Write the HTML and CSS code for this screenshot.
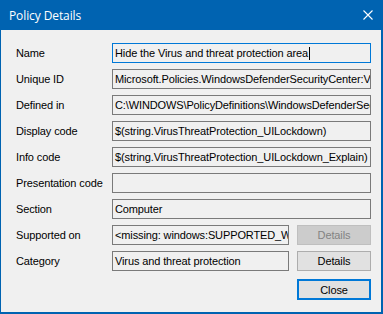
FILE: index.html
```html
<!DOCTYPE html>
<html lang="en">
<head>
    <meta charset="UTF-8">
    <title>Policy Details</title>
    <link rel="stylesheet" href="styles.css">
</head>
<body>
    <div class="window">
        <div class="titlebar">
            <span class="title">Policy Details</span>
            <svg class="close-x" width="10" height="10" viewBox="0 0 10 10">
                <path d="M0.5 0.5 L9.5 9.5 M9.5 0.5 L0.5 9.5" stroke="#ffffff" stroke-width="1.1" fill="none"/>
            </svg>
        </div>
        <div class="content">
            <div class="fields">
                <div class="label">Name</div>
                <div class="box focused">Hide the Virus and threat protection area<span class="caret"></span></div>

                <div class="label">Unique ID</div>
                <div class="box">Microsoft.Policies.WindowsDefenderSecurityCenter:VirusThreatProtection_UILockdown</div>

                <div class="label">Defined in</div>
                <div class="box">C:\WINDOWS\PolicyDefinitions\WindowsDefenderSecurityCenter.admx</div>

                <div class="label">Display code</div>
                <div class="box">$(string.VirusThreatProtection_UILockdown)</div>

                <div class="label">Info code</div>
                <div class="box">$(string.VirusThreatProtection_UILockdown_Explain)</div>

                <div class="label">Presentation code</div>
                <div class="box"></div>

                <div class="label">Section</div>
                <div class="box">Computer</div>

                <div class="label">Supported on</div>
                <div class="with-button">
                    <div class="box">&lt;missing: windows:SUPPORTED_W</div>
                    <button class="btn" disabled>Details</button>
                </div>

                <div class="label">Category</div>
                <div class="with-button">
                    <div class="box">Virus and threat protection</div>
                    <button class="btn">Details</button>
                </div>
            </div>
            <div class="actions">
                <button class="btn default">Close</button>
            </div>
        </div>
    </div>
</body>
</html>
```

FILE: styles.css
```css
html, body {
    margin: 0;
    padding: 0;
    background: #0063b1;
}
.window {
    width: 383px;
    height: 314px;
    box-sizing: border-box;
    border: solid #0063b1;
    border-width: 0 2px 2px 1px;
    background-color: #f0f0f0;
    display: flex;
    flex-direction: column;
}
.titlebar {
    height: 30px;
    background-color: #0063b1;
    display: flex;
    align-items: center;
    padding: 0 10px 0 9px;
    margin: 0 -2px 0 -1px;
}
.title {
    flex: 1;
    color: #ffffff;
    font-family: "Open Sans", "Noto Sans", sans-serif;
    font-size: 12px;
    letter-spacing: -0.1px;
    padding-top: 1px;
}
.close-x {
    margin-bottom: 1px;
}
.content {
    padding: 13px 10px 0 15px;
    font-family: "Liberation Sans", Arial, sans-serif;
    font-size: 11px;
    letter-spacing: -0.12px;
    color: #000000;
}
.fields {
    display: grid;
    grid-template-columns: 96px 1fr;
    grid-auto-rows: 20px;
    row-gap: 6px;
}
.label {
    display: flex;
    align-items: center;
}
.box {
    border: 1px solid #7a7a7a;
    background-color: #f0f0f0;
    padding: 0 2px;
    line-height: 18px;
    white-space: nowrap;
    overflow: hidden;
    min-width: 0;
}
.box.focused {
    border-color: #0078d7;
}
.caret {
    display: inline-block;
    width: 1px;
    height: 13px;
    background: #000000;
    vertical-align: -3px;
    margin-left: 1px;
}
.with-button {
    display: flex;
    gap: 8px;
    min-width: 0;
}
.with-button .box {
    flex: 1;
}
.btn {
    width: 74px;
    height: 20px;
    box-sizing: border-box;
    border: 1px solid #adadad;
    background-color: #e1e1e1;
    font-family: "Liberation Sans", Arial, sans-serif;
    font-size: 11px;
    letter-spacing: -0.12px;
    color: #000000;
    padding: 0;
}
.btn:disabled {
    border-color: #bfbfbf;
    background-color: #cccccc;
    color: #838383;
}
.btn.default {
    height: 21px;
    border: 2px solid #0078d7;
}
.actions {
    display: flex;
    justify-content: flex-end;
    margin-top: 8px;
}
```
